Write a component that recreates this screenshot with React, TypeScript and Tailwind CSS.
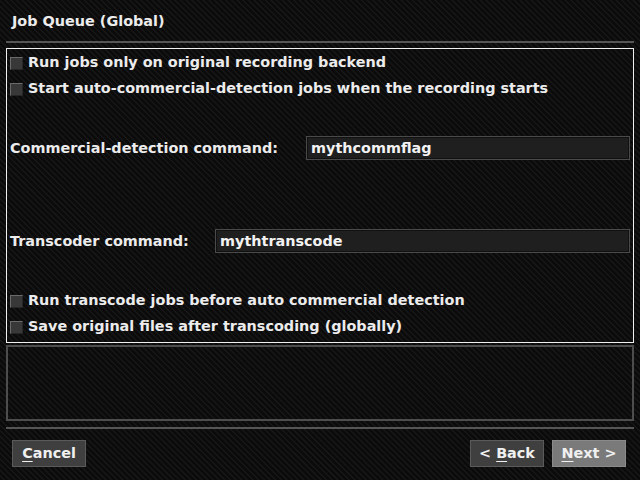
import React from "react";

const font = { fontFamily: '"DejaVu Sans", "Liberation Sans", sans-serif' };

function Check({ label }: { label: string }) {
  return (
    <div className="flex h-[26px] items-center">
      <div className="ml-[3px] h-[13px] w-[13px] border border-t-[#6a6a6a] border-l-[#6a6a6a] border-b-[#262626] border-r-[#262626] bg-[#383838]" />
      <span className="ml-[5px] text-[14.4px] font-bold text-[#ececec]">{label}</span>
    </div>
  );
}

function Field({ label, value, labelWidth }: { label: string; value: string; labelWidth: string }) {
  return (
    <div className="flex h-[24px] items-center pr-[3px]">
      <span className={`${labelWidth} shrink-0 pl-[3px] pt-[2px] text-[14.4px] font-bold text-[#ececec]`}>{label}</span>
      <div className="flex h-[24px] flex-1 items-center border border-[#4a4a4a] bg-[#1f1f1f] pl-[4px] pt-[2px] text-[14.4px] font-bold text-[#f2f2f2] shadow-[inset_0_0_0_1px_#111]">
        {value}
      </div>
    </div>
  );
}

function Btn({ children, active }: { children: React.ReactNode; active?: boolean }) {
  return (
    <div
      className={`flex h-[27px] w-[74px] items-center justify-center border text-[14.4px] font-bold text-[#f0f0f0] ${
        active ? "border-[#8a8a8a] bg-[#7a7a7a]" : "border-[#5a5a5a] bg-[#3f3f3f]"
      }`}
    >
      {children}
    </div>
  );
}

export default function App() {
  return (
    <div
      style={font}
      className="flex h-[480px] w-[640px] flex-col bg-[#0c0c0c] bg-[repeating-linear-gradient(45deg,#0b0b0b_0px,#0b0b0b_2px,#1b1b1b_3px,#0b0b0b_4px)] px-[6px]"
    >
      <div className="flex h-[41px] items-center pl-[6px] pt-[2px] text-[14.4px] font-bold text-[#ececec]">
        Job Queue (Global)
      </div>
      <div className="h-[2px] bg-[#555555]" />
      <div className="mt-[5px] flex h-[295px] flex-col border border-[#f0f0f0] pt-[1px]">
        <Check label="Run jobs only on original recording backend" />
        <Check label="Start auto-commercial-detection jobs when the recording starts" />
        <div className="mt-[34px]">
          <Field label="Commercial-detection command:" value="mythcommflag" labelWidth="w-[299px]" />
        </div>
        <div className="mt-[69px]">
          <Field label="Transcoder command:" value="mythtranscode" labelWidth="w-[208px]" />
        </div>
        <div className="mt-[35px]">
          <Check label="Run transcode jobs before auto commercial detection" />
          <Check label="Save original files after transcoding (globally)" />
        </div>
      </div>
      <div className="mt-[2px] h-[76px] border-2 border-[#4d4d4d]" />
      <div className="mt-[6px] h-[2px] bg-[#555555]" />
      <div className="mt-[11px] flex items-center px-[6px]">
        <Btn>
          <span className="underline underline-offset-[3px]">C</span>ancel
        </Btn>
        <div className="flex-1" />
        <Btn>
          &lt;&nbsp;<span className="underline underline-offset-[3px]">B</span>ack
        </Btn>
        <div className="w-[8px]" />
        <Btn active>
          <span className="underline underline-offset-[3px]">N</span>ext &gt;
        </Btn>
        <div className="w-[2px]" />
      </div>
    </div>
  );
}
